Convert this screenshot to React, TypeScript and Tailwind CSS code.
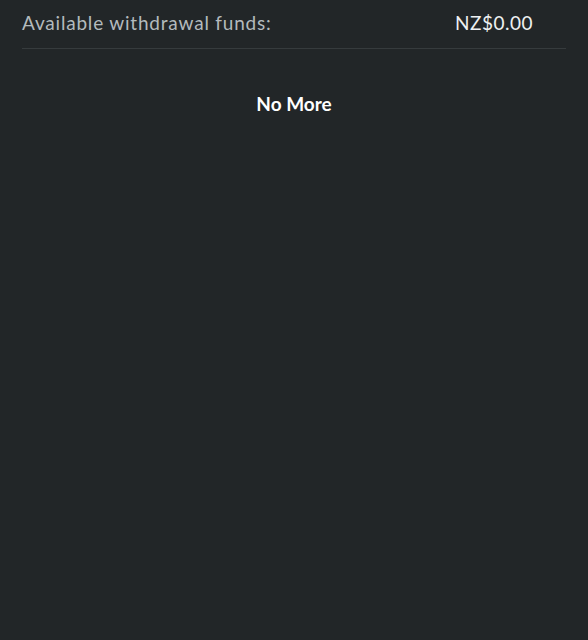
export default function App() {
  return (
    <div className="min-h-[640px] w-full bg-[#222628] font-['Lato','Noto_Sans',sans-serif]">
      <div className="px-[22px]">
        <div className="flex items-center justify-between border-b border-[#363b3d] pt-[9px] pb-[11px]">
          <span className="text-[19px] leading-[28px] tracking-[0.8px] text-[#b3babd]">Available withdrawal funds:</span>
          <span className="pr-[33px] text-[19px] leading-[28px] tracking-[0.5px] text-[#eef0f1]">NZ$0.00</span>
        </div>
      </div>
      <div className="pt-[41px] text-center text-[19px] font-bold leading-[28px] text-white">No More</div>
    </div>
  );
}
